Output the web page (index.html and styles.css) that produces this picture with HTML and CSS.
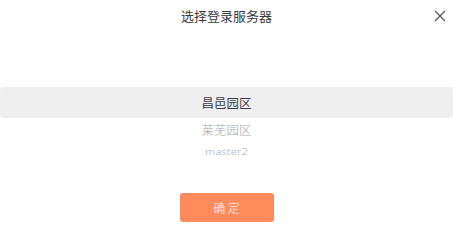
FILE: index.html
```html
<!DOCTYPE html>
<html lang="zh">
<head>
<meta charset="utf-8">
<link rel="stylesheet" href="styles.css">
</head>
<body>
<div class="dialog">
  <div class="header">
    <span></span>
    <div class="title">选择登录服务器</div>
    <div class="close">
      <svg width="12" height="12" viewBox="0 0 12 12"><path d="M1 1L11 11M11 1L1 11" stroke="#555" stroke-width="1.2" fill="none"/></svg>
    </div>
  </div>
  <div class="picker">
    <div class="item active">昌邑园区</div>
    <div class="item second">莱芜园区</div>
    <div class="item third">master2</div>
  </div>
  <div class="actions">
    <button class="confirm">确&nbsp;定</button>
  </div>
</div>
</body>
</html>
```
FILE: styles.css
```css
html, body {
  margin: 0;
  padding: 0;
  background: #fff;
}
body {
  width: 453px;
  height: 245px;
  overflow: hidden;
  font-family: "Noto Sans CJK SC", "Noto Sans", sans-serif;
  color: #333;
}
.dialog {
  display: flex;
  flex-direction: column;
}
.header {
  display: grid;
  grid-template-columns: 1fr auto 1fr;
  align-items: center;
  height: 31px;
}
.title {
  font-size: 13px;
  line-height: 31px;
  color: #3a3a3a;
}
.close {
  justify-self: end;
  display: flex;
  margin-right: 7px;
}
.picker {
  margin-top: 56px;
  display: flex;
  flex-direction: column;
}
.item {
  text-align: center;
  font-size: 12.5px;
}
.active {
  height: 31px;
  line-height: 31px;
  background: #efefef;
  border-radius: 4px;
  color: #3a3a48;
}
.second {
  height: 24px;
  line-height: 24px;
  color: #a8a8a8;
  font-weight: 300;
}
.third {
  height: 20px;
  line-height: 20px;
  font-size: 11.5px;
  color: #b0b0b0;
  font-family: "Noto Sans", sans-serif;
  font-weight: 300;
  transform: scaleY(0.85);
}
.actions {
  display: flex;
  justify-content: center;
  margin-top: 31px;
}
.confirm {
  width: 94px;
  height: 29px;
  border: none;
  border-radius: 3px;
  background: #ff8a5c;
  color: #fff;
  font-family: "Noto Sans CJK SC", sans-serif;
  font-weight: 300;
  font-size: 12px;
  padding: 0;
}
```
